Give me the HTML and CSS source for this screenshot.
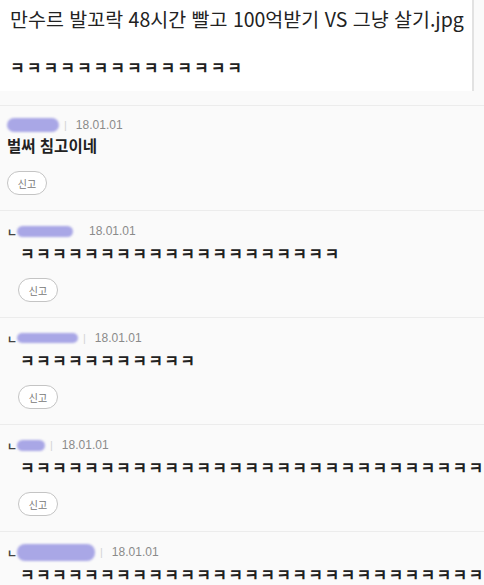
FILE: index.html
```html
<!DOCTYPE html>
<html lang="ko">
<head>
    <meta charset="UTF-8">
    <meta name="viewport" content="width=device-width, initial-scale=1.0">
    <title>만수르 발꼬락 48시간 빨고 100억받기 VS 그냥 살기.jpg</title>
    <link rel="stylesheet" href="styles.css">
</head>
<body>
    <div id="post">
        <h1 class="title">만수르 발꼬락 48시간 빨고 100억받기 VS 그냥 살기.jpg</h1>
        <p class="body">ㅋㅋㅋㅋㅋㅋㅋㅋㅋㅋㅋㅋㅋㅋ</p>
    </div>

    <div id="comments">
        <div class="comment">
            <div class="meta">
                <span class="nick" style="width: 52px; height: 14px;"></span>
                <span class="bar">|</span>
                <span class="date">18.01.01</span>
            </div>
            <div class="text first">벌써 침고이네</div>
            <button class="report">신고</button>
        </div>

        <div class="comment reply">
            <div class="meta">
                <span class="arrow">ㄴ</span>
                <span class="nick" style="width: 56px; height: 11px;"></span>
                <span class="date gap">18.01.01</span>
            </div>
            <div class="text">ㅋㅋㅋㅋㅋㅋㅋㅋㅋㅋㅋㅋㅋㅋㅋㅋㅋㅋㅋㅋ</div>
            <button class="report">신고</button>
        </div>

        <div class="comment reply">
            <div class="meta">
                <span class="arrow">ㄴ</span>
                <span class="nick" style="width: 61px; height: 10px;"></span>
                <span class="bar">|</span>
                <span class="date">18.01.01</span>
            </div>
            <div class="text">ㅋㅋㅋㅋㅋㅋㅋㅋㅋㅋㅋ</div>
            <button class="report">신고</button>
        </div>

        <div class="comment reply">
            <div class="meta">
                <span class="arrow">ㄴ</span>
                <span class="nick" style="width: 28px; height: 11px;"></span>
                <span class="bar">|</span>
                <span class="date">18.01.01</span>
            </div>
            <div class="text">ㅋㅋㅋㅋㅋㅋㅋㅋㅋㅋㅋㅋㅋㅋㅋㅋㅋㅋㅋㅋㅋㅋㅋㅋㅋㅋㅋㅋㅋㅋ</div>
            <button class="report">신고</button>
        </div>

        <div class="comment reply">
            <div class="meta">
                <span class="arrow">ㄴ</span>
                <span class="nick" style="width: 78px; height: 17px;"></span>
                <span class="bar">|</span>
                <span class="date">18.01.01</span>
            </div>
            <div class="text">ㅋㅋㅋㅋㅋㅋㅋㅋㅋㅋㅋㅋㅋㅋㅋㅋㅋㅋㅋㅋㅋㅋㅋㅋㅋㅋㅋㅋㅋㅋ</div>
        </div>
    </div>
</body>
</html>
```

FILE: styles.css
```css
body {
    margin: 0;
    background-color: #fafafa;
    font-family: "Noto Sans CJK KR", "Noto Sans", sans-serif;
    color: #222;
    overflow: hidden;
}

#post {
    background-color: #fff;
    height: 88px;
    margin-right: 10px;
    padding: 3px 0 0 10px;
    border-right: 2px solid #e2e2e2;
    margin-bottom: 14px;
}

.title {
    margin: 0;
    font-size: 19.5px;
    font-weight: 400;
    line-height: 32px;
    white-space: nowrap;
}

.body {
    margin: 20px 0 0 0;
    font-size: 16px;
    font-weight: 600;
    letter-spacing: 2px;
    line-height: 24px;
}

#comments {
    border-top: 1px solid #ececec;
}

.comment {
    padding: 11px 0 15px 7px;
    border-bottom: 1px solid #ececec;
    white-space: nowrap;
    overflow: hidden;
}

.comment.reply {
    padding-top: 12px;
}

.meta {
    display: flex;
    align-items: center;
    height: 16px;
}

.arrow {
    font-size: 11px;
    font-weight: 700;
    color: #444;
    width: 10px;
    margin-top: 2px;
}

.nick {
    display: inline-block;
    background-color: #a9a7e6;
    border-radius: 8px;
    filter: blur(1px);
}

.bar {
    color: #d4d4d4;
    font-family: "Liberation Sans", Arial, sans-serif;
    font-size: 11px;
    margin: 0 9px 0 5px;
}

.date {
    font-family: "Liberation Sans", Arial, sans-serif;
    font-size: 12px;
    color: #8a8a8a;
}

.date.gap {
    margin-left: 16px;
}

.text {
    margin-top: 1px;
    font-size: 16px;
    font-weight: 600;
    line-height: 22px;
}

.text.first {
    font-size: 15.5px;
    font-weight: 700;
}

.reply .text {
    margin-top: 3px;
    padding-left: 13px;
    letter-spacing: 1.3px;
}

.report {
    display: block;
    margin-top: 15px;
    width: 40px;
    height: 24px;
    padding: 0;
    border: 1px solid #c4c4c4;
    border-radius: 12px;
    background-color: #fff;
    color: #777;
    font-family: "Noto Sans CJK KR", sans-serif;
    font-size: 10px;
}

.reply .report {
    margin-left: 11px;
    margin-top: 14px;
}
```
